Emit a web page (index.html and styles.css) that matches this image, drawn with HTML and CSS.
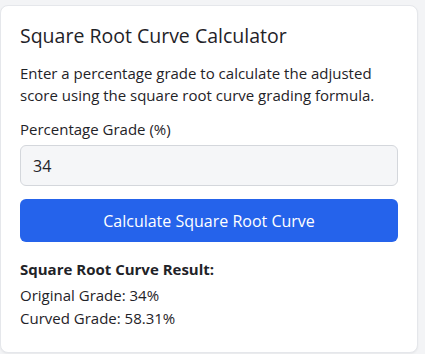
FILE: index.html
```html
<!DOCTYPE html>
<html lang="en">
<head>
    <meta charset="UTF-8">
    <meta name="viewport" content="width=device-width, initial-scale=1.0">
    <title>Square Root Curve Calculator</title>
    <link rel="stylesheet" href="styles.css">
</head>
<body>
    <div class="card">
        <h2 class="title">Square Root Curve Calculator</h2>
        <p class="intro">Enter a percentage grade to calculate the adjusted score using the square root curve grading formula.</p>

        <label class="label" for="grade">Percentage Grade (%)</label>
        <input class="input" id="grade" type="number" value="34">

        <button class="btn" id="calc">Calculate Square Root Curve</button>

        <div class="result">
            <div class="result-title">Square Root Curve Result:</div>
            <div>Original Grade: <span id="orig">34</span>%</div>
            <div>Curved Grade: <span id="curved">58.31</span>%</div>
        </div>
    </div>
</body>
</html>
```

FILE: styles.css
```css
body {
    margin: 0;
    padding: 5px 7px 5px 0;
    background: #f3f4f6;
    font-family: "Open Sans", "Noto Sans", sans-serif;
    color: #1f2328;
}

.card {
    background: #fff;
    border: 1px solid #e5e7eb;
    border-radius: 8px;
    box-shadow: 0 1px 2px rgba(0, 0, 0, 0.05);
    padding: 16px 19px 22px;
}

.title {
    margin: 0 0 12px;
    font-size: 19.5px;
    font-weight: 400;
    line-height: 28px;
}

.intro {
    margin: 0 0 12px;
    font-size: 15px;
    line-height: 22px;
}

.label {
    display: block;
    font-size: 15px;
    line-height: 22px;
    margin-bottom: 5px;
}

.input {
    display: block;
    box-sizing: border-box;
    width: 100%;
    height: 41px;
    padding: 0 12px;
    font: inherit;
    font-size: 16px;
    background: #f5f6f8;
    border: 1px solid #d4d7dc;
    border-radius: 6px;
    color: #1f2328;
}

.btn {
    display: block;
    width: 100%;
    height: 43px;
    margin-top: 13px;
    font: inherit;
    font-size: 16px;
    color: #fff;
    background: #2563eb;
    border: none;
    border-radius: 6px;
    cursor: pointer;
}

.result {
    margin-top: 16px;
    font-size: 15px;
    line-height: 23px;
}

.result-title {
    font-weight: 700;
    margin-bottom: 3px;
}
```
